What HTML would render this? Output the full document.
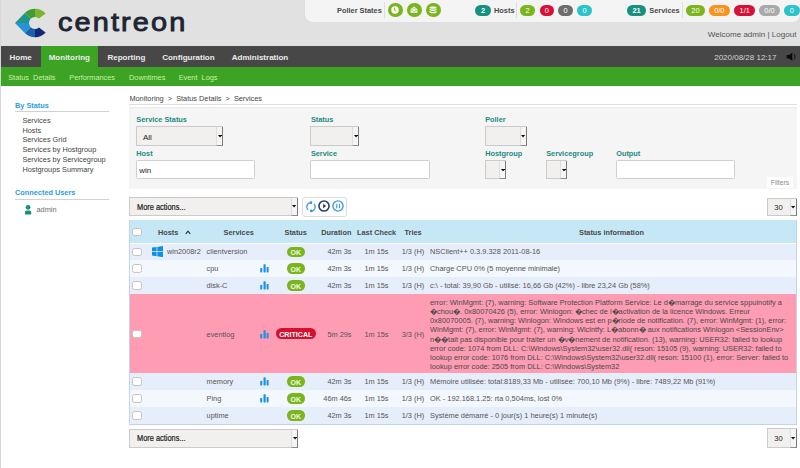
<!DOCTYPE html>
<html><head><meta charset="utf-8"><style>
html,body{margin:0;padding:0;width:800px;height:468px;overflow:hidden;background:#fff;}
body{position:relative;font-family:"Liberation Sans",sans-serif;}
.t{position:absolute;white-space:pre;}
.r{position:absolute;}
</style></head><body>
<div class="r" style="left:0.00px;top:0.00px;width:800.00px;height:46.00px;background:#e1e1e1;"></div>
<svg class="r" style="left:0.00px;top:0.00px" width="60" height="46" viewBox="0 0 60 46"><defs><clipPath id="lc"><path d="M15.0,23.0 L24.78,13.00 A14.3,14.3 0 0 1 45.63,13.43 L39.01,18.54 A6.0,6.0 0 1 0 39.01,27.46 L45.63,32.57 A14.3,14.3 0 0 1 24.78,33.00 Z"/></clipPath></defs><g clip-path="url(#lc)"><polygon points="35.0,23.0 35.00,-17.00 75.00,23.00" fill="#7bb52f"/><polygon points="35.0,23.0 6.72,-5.28 35.00,-17.00" fill="#3f9d35"/><polygon points="35.0,23.0 -5.00,23.00 6.72,-5.28" fill="#22958a"/><polygon points="35.0,23.0 6.72,51.28 -5.00,23.00" fill="#2792d8"/><polygon points="35.0,23.0 35.00,63.00 6.72,51.28" fill="#1c60a8"/><polygon points="35.0,23.0 75.00,23.00 35.00,63.00" fill="#10297a"/></g></svg>
<div class="t" style="left:57.80px;top:8.77px;font-size:26.5px;line-height:26.5px;font-weight:400;color:#1d2433;letter-spacing:1.95px;-webkit-text-stroke:0.9px #1d2433;transform:scaleX(1.09);transform-origin:0 0;">centreon</div>
<div class="r" style="left:305.00px;top:-10.00px;width:495.00px;height:32.00px;background:#f4f4f4;border-radius:7px;box-shadow:0 0 1px rgba(0,0,0,0.12);"></div>
<div class="t" style="left:337.00px;top:7.00px;font-size:7.4px;line-height:7.4px;font-weight:700;color:#4a4a4a;">Poller States</div>
<div class="r" style="left:384.00px;top:2.00px;width:1.00px;height:16.00px;background:#dedede;"></div>
<div class="r" style="left:387.80px;top:2.70px;width:14.80px;height:14.60px;background:#7ab51d;border-radius:50%;"></div>
<div class="r" style="left:407.00px;top:2.70px;width:14.80px;height:14.60px;background:#7ab51d;border-radius:50%;"></div>
<div class="r" style="left:425.80px;top:2.70px;width:14.80px;height:14.60px;background:#7ab51d;border-radius:50%;"></div>
<svg class="r" style="left:390.20px;top:5.20px" width="10" height="10" viewBox="0 0 10 10"><circle cx="5" cy="5" r="3.7" fill="#fff"/><path d="M4.5,2.6 L4.9,5.2 L5.9,6.6" stroke="#7ab51d" stroke-width="1" fill="none"/></svg>
<svg class="r" style="left:409.30px;top:5.20px" width="10" height="10" viewBox="0 0 10 10"><path d="M1.6,4.2 L5,1.4 L8.4,4.2 L8.4,7.8 L1.6,7.8 Z" fill="#fff"/><path d="M3,4.4 L5,2.9 L7,4.4" stroke="#7ab51d" stroke-width="0.6" fill="none"/><path d="M1.6,4.6 L5,6.6 L8.4,4.6" stroke="#7ab51d" stroke-width="0.7" fill="none"/></svg>
<svg class="r" style="left:428.00px;top:5.20px" width="10" height="10" viewBox="0 0 10 10"><ellipse cx="5" cy="2.6" rx="3.5" ry="1.2" fill="#fff"/><path d="M1.5,3.7 Q5,5.5 8.5,3.7 L8.5,5.1 Q5,6.9 1.5,5.1 Z" fill="#fff"/><path d="M1.5,6 Q5,7.8 8.5,6 L8.5,7.4 Q5,9.2 1.5,7.4 Z" fill="#fff"/></svg>
<div class="r" style="left:475.40px;top:4.90px;width:15.40px;height:11.40px;background:#16907f;border-radius:6px;"></div>
<div class="t" style="left:463.10px;width:40px;text-align:center;top:7.00px;font-size:7.4px;line-height:7.4px;font-weight:700;color:#fff;">2</div>
<div class="t" style="left:494.00px;top:7.00px;font-size:7.4px;line-height:7.4px;font-weight:700;color:#4a4a4a;">Hosts</div>
<div class="r" style="left:516.00px;top:2.00px;width:1.00px;height:16.00px;background:#dedede;"></div>
<div class="r" style="left:520.00px;top:4.90px;width:15.00px;height:11.40px;background:#7bb51c;border-radius:6px;"></div>
<div class="t" style="left:507.50px;width:40px;text-align:center;top:7.00px;font-size:7.4px;line-height:7.4px;font-weight:400;color:#fff;">2</div>
<div class="r" style="left:539.60px;top:4.90px;width:14.40px;height:11.40px;background:#d80f37;border-radius:6px;"></div>
<div class="t" style="left:526.80px;width:40px;text-align:center;top:7.00px;font-size:7.4px;line-height:7.4px;font-weight:400;color:#fff;">0</div>
<div class="r" style="left:557.80px;top:4.90px;width:15.40px;height:11.40px;background:#6c6c6e;border-radius:6px;"></div>
<div class="t" style="left:545.50px;width:40px;text-align:center;top:7.00px;font-size:7.4px;line-height:7.4px;font-weight:400;color:#fff;">0</div>
<div class="r" style="left:577.00px;top:4.90px;width:15.30px;height:11.40px;background:#2bc3cb;border-radius:6px;"></div>
<div class="t" style="left:564.65px;width:40px;text-align:center;top:7.00px;font-size:7.4px;line-height:7.4px;font-weight:400;color:#fff;">0</div>
<div class="r" style="left:626.80px;top:4.90px;width:19.60px;height:11.40px;background:#16907f;border-radius:6px;"></div>
<div class="t" style="left:616.60px;width:40px;text-align:center;top:7.00px;font-size:7.4px;line-height:7.4px;font-weight:700;color:#fff;">21</div>
<div class="t" style="left:649.30px;top:7.00px;font-size:7.4px;line-height:7.4px;font-weight:700;color:#4a4a4a;">Services</div>
<div class="r" style="left:682.30px;top:2.00px;width:1.00px;height:16.00px;background:#dedede;"></div>
<div class="r" style="left:685.80px;top:4.90px;width:19.30px;height:11.40px;background:#7bb51c;border-radius:6px;"></div>
<div class="t" style="left:675.45px;width:40px;text-align:center;top:7.00px;font-size:7.4px;line-height:7.4px;font-weight:400;color:#fff;">20</div>
<div class="r" style="left:709.00px;top:4.90px;width:20.70px;height:11.40px;background:#f8931f;border-radius:6px;"></div>
<div class="t" style="left:699.35px;width:40px;text-align:center;top:7.00px;font-size:7.4px;line-height:7.4px;font-weight:400;color:#fff;">0/0</div>
<div class="r" style="left:734.40px;top:4.90px;width:20.70px;height:11.40px;background:#d80f37;border-radius:6px;"></div>
<div class="t" style="left:724.75px;width:40px;text-align:center;top:7.00px;font-size:7.4px;line-height:7.4px;font-weight:400;color:#fff;">1/1</div>
<div class="r" style="left:759.00px;top:4.90px;width:21.00px;height:11.40px;background:#a9a9ac;border-radius:6px;"></div>
<div class="t" style="left:749.50px;width:40px;text-align:center;top:7.00px;font-size:7.4px;line-height:7.4px;font-weight:400;color:#fff;">0/0</div>
<div class="r" style="left:784.00px;top:4.90px;width:15.50px;height:11.40px;background:#2bc3cb;border-radius:6px;"></div>
<div class="t" style="left:771.75px;width:40px;text-align:center;top:7.00px;font-size:7.4px;line-height:7.4px;font-weight:400;color:#fff;">0</div>
<div class="t" style="left:707.75px;top:31.00px;font-size:8.05px;line-height:8.05px;font-weight:400;color:#555;">Welcome admin | Logout</div>
<div class="r" style="left:0.00px;top:0.00px;width:1.00px;height:468.00px;background:#d6d6d6;"></div>
<div class="r" style="left:1.00px;top:46.00px;width:799.00px;height:20.70px;background:#474747;"></div>
<div class="r" style="left:40.80px;top:46.00px;width:57.40px;height:20.70px;background:#3ca325;"></div>
<div class="t" style="left:9.50px;top:54.00px;font-size:8px;line-height:8px;font-weight:700;color:#ececec;">Home</div>
<div class="t" style="left:48.70px;top:54.00px;font-size:8px;line-height:8px;font-weight:700;color:#ececec;">Monitoring</div>
<div class="t" style="left:107.50px;top:54.00px;font-size:8px;line-height:8px;font-weight:700;color:#ececec;">Reporting</div>
<div class="t" style="left:162.20px;top:54.00px;font-size:8px;line-height:8px;font-weight:700;color:#ececec;">Configuration</div>
<div class="t" style="left:231.80px;top:54.00px;font-size:8px;line-height:8px;font-weight:700;color:#ececec;">Administration</div>
<div class="t" style="left:714.20px;top:54.00px;font-size:8px;line-height:8px;font-weight:400;color:#d4d4d4;">2020/08/28 12:17</div>
<svg class="r" style="left:786.00px;top:51.50px" width="12" height="10" viewBox="0 0 12 10"><path d="M0.7,3 L3,3 L6.3,0.7 L6.3,8.8 L3,6.5 L0.7,6.5 Z" fill="#0a0a0a"/><path d="M7.4,1.1 Q11.6,4.75 7.4,8.7 Q9.6,4.75 7.4,1.1 Z" fill="#111"/></svg>
<div class="r" style="left:1.00px;top:66.70px;width:799.00px;height:19.30px;background:#3ca325;"></div>
<div class="t" style="left:8.20px;top:74.00px;font-size:7.35px;line-height:7.35px;font-weight:400;color:#c8f2a4;">Status  Details</div>
<div class="t" style="left:69.30px;top:74.00px;font-size:7.35px;line-height:7.35px;font-weight:400;color:#c8f2a4;">Performances</div>
<div class="t" style="left:129.00px;top:74.00px;font-size:7.35px;line-height:7.35px;font-weight:400;color:#c8f2a4;">Downtimes</div>
<div class="t" style="left:178.70px;top:74.00px;font-size:7.35px;line-height:7.35px;font-weight:400;color:#c8f2a4;">Event  Logs</div>
<div class="t" style="left:15.00px;top:102.00px;font-size:7.35px;line-height:7.35px;font-weight:700;color:#2b9de0;">By Status</div>
<div class="r" style="left:15.00px;top:111.00px;width:94.00px;height:1.40px;background:#d2d2d2;"></div>
<div class="t" style="left:22.40px;top:117.00px;font-size:7.35px;line-height:7.35px;font-weight:400;color:#444;">Services</div>
<div class="t" style="left:22.40px;top:127.00px;font-size:7.35px;line-height:7.35px;font-weight:400;color:#444;">Hosts</div>
<div class="t" style="left:22.40px;top:136.00px;font-size:7.35px;line-height:7.35px;font-weight:400;color:#444;">Services Grid</div>
<div class="t" style="left:22.40px;top:146.00px;font-size:7.35px;line-height:7.35px;font-weight:400;color:#444;">Services by Hostgroup</div>
<div class="t" style="left:22.40px;top:156.00px;font-size:7.35px;line-height:7.35px;font-weight:400;color:#444;">Services by Servicegroup</div>
<div class="t" style="left:22.40px;top:166.00px;font-size:7.35px;line-height:7.35px;font-weight:400;color:#444;">Hostgroups Summary</div>
<div class="t" style="left:15.00px;top:189.00px;font-size:7.35px;line-height:7.35px;font-weight:700;color:#2b9de0;">Connected Users</div>
<div class="r" style="left:15.00px;top:199.00px;width:93.75px;height:1.40px;background:#d2d2d2;"></div>
<svg class="r" style="left:24.00px;top:204.00px" width="9" height="11" viewBox="0 0 9 11"><circle cx="4.1" cy="3.3" r="2.35" fill="#16907f"/><path d="M1,10.4 L1,8.2 Q1,6.6 2.6,6.6 L5.6,6.6 Q7.2,6.6 7.2,8.2 L7.2,10.4 Z" fill="#16907f"/></svg>
<div class="t" style="left:36.50px;top:206.00px;font-size:7.35px;line-height:7.35px;font-weight:400;color:#707070;">admin</div>
<div class="t" style="left:129.40px;top:95.00px;font-size:7.35px;line-height:7.35px;font-weight:400;color:#444;">Monitoring  &gt;  Status Details  &gt;  Services</div>
<div class="r" style="left:129.40px;top:104.00px;width:667.60px;height:1.00px;background:#dedede;"></div>
<div class="r" style="left:129.40px;top:107.00px;width:667.60px;height:81.50px;background:#f5f5f5;border-top:1px solid #e9e9e9;box-sizing:border-box;"></div>
<div class="r" style="left:766.50px;top:176.80px;width:26.70px;height:11.70px;background:#ffffff;"></div>
<div class="t" style="left:770.80px;top:180.00px;font-size:6.7px;line-height:6.7px;font-weight:400;color:#8a8a8a;">Filters</div>
<div class="t" style="left:136.30px;top:116.00px;font-size:7.35px;line-height:7.35px;font-weight:700;color:#1d8a7f;">Service Status</div>
<div class="t" style="left:310.90px;top:116.00px;font-size:7.35px;line-height:7.35px;font-weight:700;color:#1d8a7f;">Status</div>
<div class="t" style="left:485.20px;top:116.00px;font-size:7.35px;line-height:7.35px;font-weight:700;color:#1d8a7f;">Poller</div>
<div class="t" style="left:136.30px;top:150.00px;font-size:7.35px;line-height:7.35px;font-weight:700;color:#1d8a7f;">Host</div>
<div class="t" style="left:310.90px;top:150.00px;font-size:7.35px;line-height:7.35px;font-weight:700;color:#1d8a7f;">Service</div>
<div class="t" style="left:485.20px;top:150.00px;font-size:7.35px;line-height:7.35px;font-weight:700;color:#1d8a7f;">Hostgroup</div>
<div class="t" style="left:546.20px;top:150.00px;font-size:7.35px;line-height:7.35px;font-weight:700;color:#1d8a7f;">Servicegroup</div>
<div class="t" style="left:616.20px;top:150.00px;font-size:7.35px;line-height:7.35px;font-weight:700;color:#1d8a7f;">Output</div>
<div class="r" style="left:136.00px;top:126.40px;width:87.20px;height:19.40px;background:#f1f0ef;border:1px solid #cbcbcb;box-sizing:border-box;"></div>
<div class="r" style="left:216.20px;top:127.40px;width:7.00px;height:18.40px;background:#f5f5f5;border-left:1px solid #dedede;border-right:1.4px solid #7a7a7a;border-bottom:1.3px solid #8e8e8e;box-sizing:border-box;"></div>
<svg class="r" style="left:217.80px;top:135.00px" width="4.2" height="2.6" viewBox="0 0 4.2 2.6"><polygon points="0,0 4.2,0 2.1,2.6" fill="#111"/></svg>
<div class="t" style="left:143.00px;top:134.00px;font-size:8.0px;line-height:8.0px;font-weight:400;color:#1a1a1a;">All</div>
<div class="r" style="left:310.40px;top:126.40px;width:48.60px;height:19.40px;background:#f1f0ef;border:1px solid #cbcbcb;box-sizing:border-box;"></div>
<div class="r" style="left:352.00px;top:127.40px;width:7.00px;height:18.40px;background:#f5f5f5;border-left:1px solid #dedede;border-right:1.4px solid #7a7a7a;border-bottom:1.3px solid #8e8e8e;box-sizing:border-box;"></div>
<svg class="r" style="left:353.60px;top:135.00px" width="4.2" height="2.6" viewBox="0 0 4.2 2.6"><polygon points="0,0 4.2,0 2.1,2.6" fill="#111"/></svg>
<div class="r" style="left:485.00px;top:126.30px;width:41.80px;height:19.50px;background:#f1f0ef;border:1px solid #cbcbcb;box-sizing:border-box;"></div>
<div class="r" style="left:519.80px;top:127.30px;width:7.00px;height:18.50px;background:#f5f5f5;border-left:1px solid #dedede;border-right:1.4px solid #7a7a7a;border-bottom:1.3px solid #8e8e8e;box-sizing:border-box;"></div>
<svg class="r" style="left:521.40px;top:134.95px" width="4.2" height="2.6" viewBox="0 0 4.2 2.6"><polygon points="0,0 4.2,0 2.1,2.6" fill="#111"/></svg>
<div class="r" style="left:485.00px;top:160.30px;width:21.20px;height:18.90px;background:#f1f0ef;border:1px solid #cbcbcb;box-sizing:border-box;"></div>
<div class="r" style="left:499.20px;top:161.30px;width:7.00px;height:17.90px;background:#f5f5f5;border-left:1px solid #dedede;border-right:1.4px solid #7a7a7a;border-bottom:1.3px solid #8e8e8e;box-sizing:border-box;"></div>
<svg class="r" style="left:500.80px;top:168.65px" width="4.2" height="2.6" viewBox="0 0 4.2 2.6"><polygon points="0,0 4.2,0 2.1,2.6" fill="#111"/></svg>
<div class="r" style="left:546.00px;top:160.30px;width:21.30px;height:18.90px;background:#f1f0ef;border:1px solid #cbcbcb;box-sizing:border-box;"></div>
<div class="r" style="left:560.30px;top:161.30px;width:7.00px;height:17.90px;background:#f5f5f5;border-left:1px solid #dedede;border-right:1.4px solid #7a7a7a;border-bottom:1.3px solid #8e8e8e;box-sizing:border-box;"></div>
<svg class="r" style="left:561.90px;top:168.65px" width="4.2" height="2.6" viewBox="0 0 4.2 2.6"><polygon points="0,0 4.2,0 2.1,2.6" fill="#111"/></svg>
<div class="r" style="left:135.60px;top:160.20px;width:119.60px;height:19.30px;background:#ffffff;border:1px solid #cfcfcf;border-radius:1.5px;box-sizing:border-box;"></div>
<div class="t" style="left:139.20px;top:167.00px;font-size:7.9px;line-height:7.9px;font-weight:400;color:#1a1a1a;">win</div>
<div class="r" style="left:310.40px;top:160.20px;width:119.50px;height:19.30px;background:#ffffff;border:1px solid #cfcfcf;border-radius:1.5px;box-sizing:border-box;"></div>
<div class="r" style="left:616.00px;top:160.20px;width:119.30px;height:19.30px;background:#ffffff;border:1px solid #cfcfcf;border-radius:1.5px;box-sizing:border-box;"></div>
<div class="r" style="left:129.20px;top:197.20px;width:168.60px;height:18.40px;background:#f1f0ef;border:1px solid #cbcbcb;box-sizing:border-box;"></div>
<div class="r" style="left:290.80px;top:198.20px;width:7.00px;height:17.40px;background:#f5f5f5;border-left:1px solid #dedede;border-right:1.4px solid #7a7a7a;border-bottom:1.3px solid #8e8e8e;box-sizing:border-box;"></div>
<svg class="r" style="left:292.40px;top:205.30px" width="4.2" height="2.6" viewBox="0 0 4.2 2.6"><polygon points="0,0 4.2,0 2.1,2.6" fill="#111"/></svg>
<div class="t" style="left:136.80px;top:204.00px;font-size:8.2px;line-height:8.2px;font-weight:400;color:#1a1a1a;transform:scaleX(0.905);transform-origin:0 0;-webkit-text-stroke:0.2px #1a1a1a;">More actions...</div>
<div class="r" style="left:302.00px;top:197.00px;width:44.60px;height:19.60px;background:#ffffff;border:1px solid #dcdcdc;border-radius:3px;box-sizing:border-box;"></div>
<svg class="r" style="left:304.50px;top:200.60px" width="12" height="12" viewBox="0 0 12 12"><path d="M6,1.6 A4.2,4.2 0 0 0 3.03,8.77" stroke="#3a95e4" stroke-width="1.2" fill="none"/><path d="M6,10 A4.2,4.2 0 0 0 8.97,2.83" stroke="#3a95e4" stroke-width="1.2" fill="none"/><circle cx="5.9" cy="1.7" r="1.35" fill="#3a95e4"/><circle cx="6.3" cy="9.9" r="1.35" fill="#3a95e4"/></svg>
<svg class="r" style="left:317.80px;top:200.30px" width="12" height="12" viewBox="0 0 12 12"><circle cx="6" cy="6" r="5.05" stroke="#25446a" stroke-width="1.6" fill="none"/><polygon points="5.1,3.5 8.1,6 5.1,8.5" fill="#25446a"/></svg>
<svg class="r" style="left:331.60px;top:200.40px" width="12" height="12" viewBox="0 0 12 12"><circle cx="6" cy="6" r="5.1" stroke="#3d9be8" stroke-width="1.4" fill="none"/><rect x="4.2" y="3.8" width="1.15" height="4.5" fill="#3d9be8"/><rect x="7" y="3.8" width="1.15" height="4.5" fill="#3d9be8"/></svg>
<div class="r" style="left:767.30px;top:197.70px;width:29.50px;height:18.70px;background:#f1f0ef;border:1px solid #cbcbcb;box-sizing:border-box;"></div>
<div class="r" style="left:789.80px;top:198.70px;width:7.00px;height:17.70px;background:#f5f5f5;border-left:1px solid #dedede;border-right:1.4px solid #7a7a7a;border-bottom:1.3px solid #8e8e8e;box-sizing:border-box;"></div>
<svg class="r" style="left:791.40px;top:205.95px" width="4.2" height="2.6" viewBox="0 0 4.2 2.6"><polygon points="0,0 4.2,0 2.1,2.6" fill="#111"/></svg>
<div class="t" style="left:774.30px;top:204.00px;font-size:7.6px;line-height:7.6px;font-weight:400;color:#222;">30</div>
<div class="r" style="left:129.00px;top:219.80px;width:668.00px;height:23.50px;background:#c5e7f6;"></div>
<div class="r" style="left:129.00px;top:243.70px;width:668.00px;height:17.10px;background:#e7eefb;"></div>
<div class="r" style="left:129.00px;top:260.10px;width:668.00px;height:17.60px;background:#f3f7fe;"></div>
<div class="r" style="left:129.00px;top:277.00px;width:668.00px;height:17.50px;background:#e7eefb;"></div>
<div class="r" style="left:129.00px;top:293.80px;width:668.00px;height:79.70px;background:#fe9cb3;"></div>
<div class="r" style="left:129.00px;top:372.80px;width:668.00px;height:18.00px;background:#e7eefb;"></div>
<div class="r" style="left:129.00px;top:390.10px;width:668.00px;height:17.80px;background:#f3f7fe;"></div>
<div class="r" style="left:129.00px;top:407.20px;width:668.00px;height:16.80px;background:#e7eefb;"></div>
<div class="r" style="left:129.00px;top:219.80px;width:1.00px;height:204.80px;background:#c3d3e3;"></div>
<div class="r" style="left:796.00px;top:219.80px;width:1.00px;height:204.80px;background:#c3d3e3;"></div>
<div class="r" style="left:129.00px;top:423.60px;width:668.00px;height:1.00px;background:#c3d3e3;"></div>
<div class="r" style="left:132.20px;top:227.80px;width:9.60px;height:8.60px;background:#ffffff;border:1px solid #c6c3bf;border-radius:2.5px;box-sizing:border-box;"></div>
<div class="t" style="left:158.00px;top:229.00px;font-size:7.35px;line-height:7.35px;font-weight:700;color:#4a4a4a;">Hosts</div>
<svg class="r" style="left:184.50px;top:230.20px" width="6" height="4.5" viewBox="0 0 6 4.5"><path d="M0.8,3.8 L3,1.2 L5.2,3.8" stroke="#23395a" stroke-width="1.2" fill="none"/></svg>
<div class="t" style="left:223.60px;top:229.00px;font-size:7.35px;line-height:7.35px;font-weight:700;color:#4a4a4a;">Services</div>
<div class="t" style="left:284.50px;top:229.00px;font-size:7.35px;line-height:7.35px;font-weight:700;color:#4a4a4a;">Status</div>
<div class="t" style="left:321.20px;top:229.00px;font-size:7.35px;line-height:7.35px;font-weight:700;color:#4a4a4a;">Duration</div>
<div class="t" style="left:357.00px;top:229.00px;font-size:7.35px;line-height:7.35px;font-weight:700;color:#4a4a4a;">Last Check</div>
<div class="t" style="left:404.50px;top:229.00px;font-size:7.35px;line-height:7.35px;font-weight:700;color:#4a4a4a;">Tries</div>
<div class="t" style="left:579.00px;top:229.00px;font-size:7.35px;line-height:7.35px;font-weight:700;color:#4a4a4a;">Status information</div>
<div class="r" style="left:132.20px;top:247.60px;width:9.60px;height:8.60px;background:#ffffff;border:1px solid #c6c3bf;border-radius:2.5px;box-sizing:border-box;"></div>
<svg class="r" style="left:152.10px;top:246.30px" width="11" height="11.2" viewBox="0 0 11 11.2"><path d="M0,1.6 L4.6,1 L4.6,5.3 L0,5.3 Z M5.3,0.9 L11,0 L11,5.3 L5.3,5.3 Z M0,5.9 L4.6,5.9 L4.6,10.2 L0,9.6 Z M5.3,5.9 L11,5.9 L11,11.2 L5.3,10.3 Z" fill="#0c8fe8"/></svg>
<div class="t" style="left:167.00px;top:248.00px;font-size:7.35px;line-height:7.35px;font-weight:400;color:#555;">win2008r2</div>
<div class="t" style="left:206.60px;top:248.00px;font-size:7.35px;line-height:7.35px;font-weight:400;color:#555;">clientversion</div>
<div class="r" style="left:286.70px;top:246.70px;width:18.30px;height:10.40px;background:#7ab51c;border-radius:5.2px;"></div>
<div class="t" style="left:280.85px;width:30px;text-align:center;top:249.00px;font-size:7.0px;line-height:7.0px;font-weight:700;color:#f4f6e8;">OK</div>
<div class="t" style="left:151.50px;width:200px;text-align:right;top:248.00px;font-size:7.35px;line-height:7.35px;font-weight:400;color:#555;">42m 3s</div>
<div class="t" style="left:276.50px;width:200px;text-align:center;top:248.00px;font-size:7.35px;line-height:7.35px;font-weight:400;color:#555;">1m 15s</div>
<div class="t" style="left:401.70px;top:248.00px;font-size:7.35px;line-height:7.35px;font-weight:400;color:#555;">1/3 (H)</div>
<div class="t" style="left:430.00px;top:248.00px;font-size:7.42px;line-height:7.42px;font-weight:400;color:#555;">NSClient++ 0.3.9.328 2011-08-16</div>
<div class="r" style="left:132.20px;top:264.25px;width:9.60px;height:8.60px;background:#ffffff;border:1px solid #c6c3bf;border-radius:2.5px;box-sizing:border-box;"></div>
<div class="t" style="left:206.60px;top:265.00px;font-size:7.35px;line-height:7.35px;font-weight:400;color:#555;">cpu</div>
<svg class="r" style="left:260.40px;top:264.15px" width="9" height="9" viewBox="0 0 9 9"><rect x="0.2" y="4" width="2" height="4.4" rx="0.6" fill="#1b90e4"/><rect x="3.5" y="0.2" width="2.2" height="8.2" rx="0.6" fill="#1b90e4"/><rect x="6.6" y="3" width="2" height="5.4" rx="0.6" fill="#1b90e4"/></svg>
<div class="r" style="left:286.70px;top:263.35px;width:18.30px;height:10.40px;background:#7ab51c;border-radius:5.2px;"></div>
<div class="t" style="left:280.85px;width:30px;text-align:center;top:266.00px;font-size:7.0px;line-height:7.0px;font-weight:700;color:#f4f6e8;">OK</div>
<div class="t" style="left:151.50px;width:200px;text-align:right;top:265.00px;font-size:7.35px;line-height:7.35px;font-weight:400;color:#555;">42m 3s</div>
<div class="t" style="left:276.50px;width:200px;text-align:center;top:265.00px;font-size:7.35px;line-height:7.35px;font-weight:400;color:#555;">1m 15s</div>
<div class="t" style="left:401.70px;top:265.00px;font-size:7.35px;line-height:7.35px;font-weight:400;color:#555;">1/3 (H)</div>
<div class="t" style="left:430.00px;top:265.00px;font-size:7.42px;line-height:7.42px;font-weight:400;color:#555;">Charge CPU 0% (5 moyenne minimale)</div>
<div class="r" style="left:132.20px;top:281.10px;width:9.60px;height:8.60px;background:#ffffff;border:1px solid #c6c3bf;border-radius:2.5px;box-sizing:border-box;"></div>
<div class="t" style="left:206.60px;top:282.00px;font-size:7.35px;line-height:7.35px;font-weight:400;color:#555;">disk-C</div>
<svg class="r" style="left:260.40px;top:281.00px" width="9" height="9" viewBox="0 0 9 9"><rect x="0.2" y="4" width="2" height="4.4" rx="0.6" fill="#1b90e4"/><rect x="3.5" y="0.2" width="2.2" height="8.2" rx="0.6" fill="#1b90e4"/><rect x="6.6" y="3" width="2" height="5.4" rx="0.6" fill="#1b90e4"/></svg>
<div class="r" style="left:286.70px;top:280.20px;width:18.30px;height:10.40px;background:#7ab51c;border-radius:5.2px;"></div>
<div class="t" style="left:280.85px;width:30px;text-align:center;top:283.00px;font-size:7.0px;line-height:7.0px;font-weight:700;color:#f4f6e8;">OK</div>
<div class="t" style="left:151.50px;width:200px;text-align:right;top:282.00px;font-size:7.35px;line-height:7.35px;font-weight:400;color:#555;">42m 3s</div>
<div class="t" style="left:276.50px;width:200px;text-align:center;top:282.00px;font-size:7.35px;line-height:7.35px;font-weight:400;color:#555;">1m 15s</div>
<div class="t" style="left:401.70px;top:282.00px;font-size:7.35px;line-height:7.35px;font-weight:400;color:#555;">1/3 (H)</div>
<div class="t" style="left:430.00px;top:282.00px;font-size:7.42px;line-height:7.42px;font-weight:400;color:#555;">c:\ - total: 39,90 Gb - utilisé: 16,66 Gb (42%) - libre 23,24 Gb (58%)</div>
<div class="r" style="left:132.20px;top:329.60px;width:9.60px;height:8.60px;background:#ffffff;border:1px solid #c6c3bf;border-radius:2.5px;box-sizing:border-box;"></div>
<div class="t" style="left:206.60px;top:331.00px;font-size:7.35px;line-height:7.35px;font-weight:400;color:#555;">eventlog</div>
<svg class="r" style="left:260.40px;top:329.50px" width="9" height="9" viewBox="0 0 9 9"><rect x="0.2" y="4" width="2" height="4.4" rx="0.6" fill="#1b90e4"/><rect x="3.5" y="0.2" width="2.2" height="8.2" rx="0.6" fill="#1b90e4"/><rect x="6.6" y="3" width="2" height="5.4" rx="0.6" fill="#1b90e4"/></svg>
<div class="r" style="left:276.00px;top:328.40px;width:39.60px;height:11.00px;background:#d3102f;border-radius:5.5px;"></div>
<div class="t" style="left:265.80px;width:60px;text-align:center;top:332.00px;font-size:7.1px;line-height:7.1px;font-weight:700;color:#ffffff;">CRITICAL</div>
<div class="t" style="left:151.50px;width:200px;text-align:right;top:331.00px;font-size:7.35px;line-height:7.35px;font-weight:400;color:#555;">5m 29s</div>
<div class="t" style="left:276.50px;width:200px;text-align:center;top:331.00px;font-size:7.35px;line-height:7.35px;font-weight:400;color:#555;">1m 15s</div>
<div class="t" style="left:401.70px;top:331.00px;font-size:7.35px;line-height:7.35px;font-weight:400;color:#555;">3/3 (H)</div>
<div class="t" style="left:430.00px;top:299.00px;font-size:7.42px;line-height:7.42px;font-weight:400;color:#4a4a4a;">error: WinMgmt: (7), warning: Software Protection Platform Service: Le d�marrage du service sppuinotify a</div>
<div class="t" style="left:430.00px;top:308.00px;font-size:7.42px;line-height:7.42px;font-weight:400;color:#4a4a4a;">�chou�. 0x80070426 (5), error: Winlogon: �chec de l�activation de la licence Windows. Erreur</div>
<div class="t" style="left:430.00px;top:317.00px;font-size:7.42px;line-height:7.42px;font-weight:400;color:#4a4a4a;">0x80070005. (7), warning: Winlogon: Windows est en p�riode de notification. (7), error: WinMgmt: (1), error:</div>
<div class="t" style="left:430.00px;top:326.00px;font-size:7.42px;line-height:7.42px;font-weight:400;color:#4a4a4a;">WinMgmt: (7), error: WinMgmt: (7), warning: Wlclntfy: L�abonn� aux notifications Winlogon &lt;SessionEnv&gt;</div>
<div class="t" style="left:430.00px;top:336.00px;font-size:7.42px;line-height:7.42px;font-weight:400;color:#4a4a4a;">n��tait pas disponible pour traiter un �v�nement de notification. (13), warning: USER32: failed to lookup</div>
<div class="t" style="left:430.00px;top:345.00px;font-size:7.42px;line-height:7.42px;font-weight:400;color:#4a4a4a;">error code: 1074 from DLL: C:\Windows\System32\user32.dll( reson: 15105 (9), warning: USER32: failed to</div>
<div class="t" style="left:430.00px;top:354.00px;font-size:7.42px;line-height:7.42px;font-weight:400;color:#4a4a4a;">lookup error code: 1076 from DLL: C:\Windows\System32\user32.dll( reson: 15100 (1), error: Server: failed to</div>
<div class="t" style="left:430.00px;top:363.00px;font-size:7.42px;line-height:7.42px;font-weight:400;color:#4a4a4a;">lookup error code: 2505 from DLL: C:\Windows\System32</div>
<div class="r" style="left:132.20px;top:377.15px;width:9.60px;height:8.60px;background:#ffffff;border:1px solid #c6c3bf;border-radius:2.5px;box-sizing:border-box;"></div>
<div class="t" style="left:206.60px;top:378.00px;font-size:7.35px;line-height:7.35px;font-weight:400;color:#555;">memory</div>
<svg class="r" style="left:260.40px;top:377.05px" width="9" height="9" viewBox="0 0 9 9"><rect x="0.2" y="4" width="2" height="4.4" rx="0.6" fill="#1b90e4"/><rect x="3.5" y="0.2" width="2.2" height="8.2" rx="0.6" fill="#1b90e4"/><rect x="6.6" y="3" width="2" height="5.4" rx="0.6" fill="#1b90e4"/></svg>
<div class="r" style="left:286.70px;top:376.25px;width:18.30px;height:10.40px;background:#7ab51c;border-radius:5.2px;"></div>
<div class="t" style="left:280.85px;width:30px;text-align:center;top:379.00px;font-size:7.0px;line-height:7.0px;font-weight:700;color:#f4f6e8;">OK</div>
<div class="t" style="left:151.50px;width:200px;text-align:right;top:378.00px;font-size:7.35px;line-height:7.35px;font-weight:400;color:#555;">42m 3s</div>
<div class="t" style="left:276.50px;width:200px;text-align:center;top:378.00px;font-size:7.35px;line-height:7.35px;font-weight:400;color:#555;">1m 15s</div>
<div class="t" style="left:401.70px;top:378.00px;font-size:7.35px;line-height:7.35px;font-weight:400;color:#555;">1/3 (H)</div>
<div class="t" style="left:430.00px;top:378.00px;font-size:7.42px;line-height:7.42px;font-weight:400;color:#555;">Mémoire utilisée: total:8189,33 Mb - utilisée: 700,10 Mb (9%) - libre: 7489,22 Mb (91%)</div>
<div class="r" style="left:132.20px;top:394.35px;width:9.60px;height:8.60px;background:#ffffff;border:1px solid #c6c3bf;border-radius:2.5px;box-sizing:border-box;"></div>
<div class="t" style="left:206.60px;top:395.00px;font-size:7.35px;line-height:7.35px;font-weight:400;color:#555;">Ping</div>
<svg class="r" style="left:260.40px;top:394.25px" width="9" height="9" viewBox="0 0 9 9"><rect x="0.2" y="4" width="2" height="4.4" rx="0.6" fill="#1b90e4"/><rect x="3.5" y="0.2" width="2.2" height="8.2" rx="0.6" fill="#1b90e4"/><rect x="6.6" y="3" width="2" height="5.4" rx="0.6" fill="#1b90e4"/></svg>
<div class="r" style="left:286.70px;top:393.45px;width:18.30px;height:10.40px;background:#7ab51c;border-radius:5.2px;"></div>
<div class="t" style="left:280.85px;width:30px;text-align:center;top:396.00px;font-size:7.0px;line-height:7.0px;font-weight:700;color:#f4f6e8;">OK</div>
<div class="t" style="left:151.50px;width:200px;text-align:right;top:395.00px;font-size:7.35px;line-height:7.35px;font-weight:400;color:#555;">46m 46s</div>
<div class="t" style="left:276.50px;width:200px;text-align:center;top:395.00px;font-size:7.35px;line-height:7.35px;font-weight:400;color:#555;">1m 15s</div>
<div class="t" style="left:401.70px;top:395.00px;font-size:7.35px;line-height:7.35px;font-weight:400;color:#555;">1/3 (H)</div>
<div class="t" style="left:430.00px;top:395.00px;font-size:7.42px;line-height:7.42px;font-weight:400;color:#555;">OK - 192.168.1.25: rta 0,504ms, lost 0%</div>
<div class="r" style="left:132.20px;top:411.30px;width:9.60px;height:8.60px;background:#ffffff;border:1px solid #c6c3bf;border-radius:2.5px;box-sizing:border-box;"></div>
<div class="t" style="left:206.60px;top:412.00px;font-size:7.35px;line-height:7.35px;font-weight:400;color:#555;">uptime</div>
<div class="r" style="left:286.70px;top:410.40px;width:18.30px;height:10.40px;background:#7ab51c;border-radius:5.2px;"></div>
<div class="t" style="left:280.85px;width:30px;text-align:center;top:413.00px;font-size:7.0px;line-height:7.0px;font-weight:700;color:#f4f6e8;">OK</div>
<div class="t" style="left:151.50px;width:200px;text-align:right;top:412.00px;font-size:7.35px;line-height:7.35px;font-weight:400;color:#555;">42m 3s</div>
<div class="t" style="left:276.50px;width:200px;text-align:center;top:412.00px;font-size:7.35px;line-height:7.35px;font-weight:400;color:#555;">1m 15s</div>
<div class="t" style="left:401.70px;top:412.00px;font-size:7.35px;line-height:7.35px;font-weight:400;color:#555;">1/3 (H)</div>
<div class="t" style="left:430.00px;top:412.00px;font-size:7.42px;line-height:7.42px;font-weight:400;color:#555;">Système démarré - 0 jour(s) 1 heure(s) 1 minute(s)</div>
<div class="r" style="left:129.20px;top:428.50px;width:168.70px;height:19.40px;background:#f1f0ef;border:1px solid #cbcbcb;box-sizing:border-box;"></div>
<div class="r" style="left:290.90px;top:429.50px;width:7.00px;height:18.40px;background:#f5f5f5;border-left:1px solid #dedede;border-right:1.4px solid #7a7a7a;border-bottom:1.3px solid #8e8e8e;box-sizing:border-box;"></div>
<svg class="r" style="left:292.50px;top:437.10px" width="4.2" height="2.6" viewBox="0 0 4.2 2.6"><polygon points="0,0 4.2,0 2.1,2.6" fill="#111"/></svg>
<div class="t" style="left:136.80px;top:435.00px;font-size:8.2px;line-height:8.2px;font-weight:400;color:#1a1a1a;transform:scaleX(0.905);transform-origin:0 0;-webkit-text-stroke:0.2px #1a1a1a;">More actions...</div>
<div class="r" style="left:767.30px;top:428.30px;width:29.50px;height:19.70px;background:#f1f0ef;border:1px solid #cbcbcb;box-sizing:border-box;"></div>
<div class="r" style="left:789.80px;top:429.30px;width:7.00px;height:18.70px;background:#f5f5f5;border-left:1px solid #dedede;border-right:1.4px solid #7a7a7a;border-bottom:1.3px solid #8e8e8e;box-sizing:border-box;"></div>
<svg class="r" style="left:791.40px;top:437.05px" width="4.2" height="2.6" viewBox="0 0 4.2 2.6"><polygon points="0,0 4.2,0 2.1,2.6" fill="#111"/></svg>
<div class="t" style="left:774.30px;top:435.00px;font-size:7.6px;line-height:7.6px;font-weight:400;color:#222;">30</div>
</body></html>
